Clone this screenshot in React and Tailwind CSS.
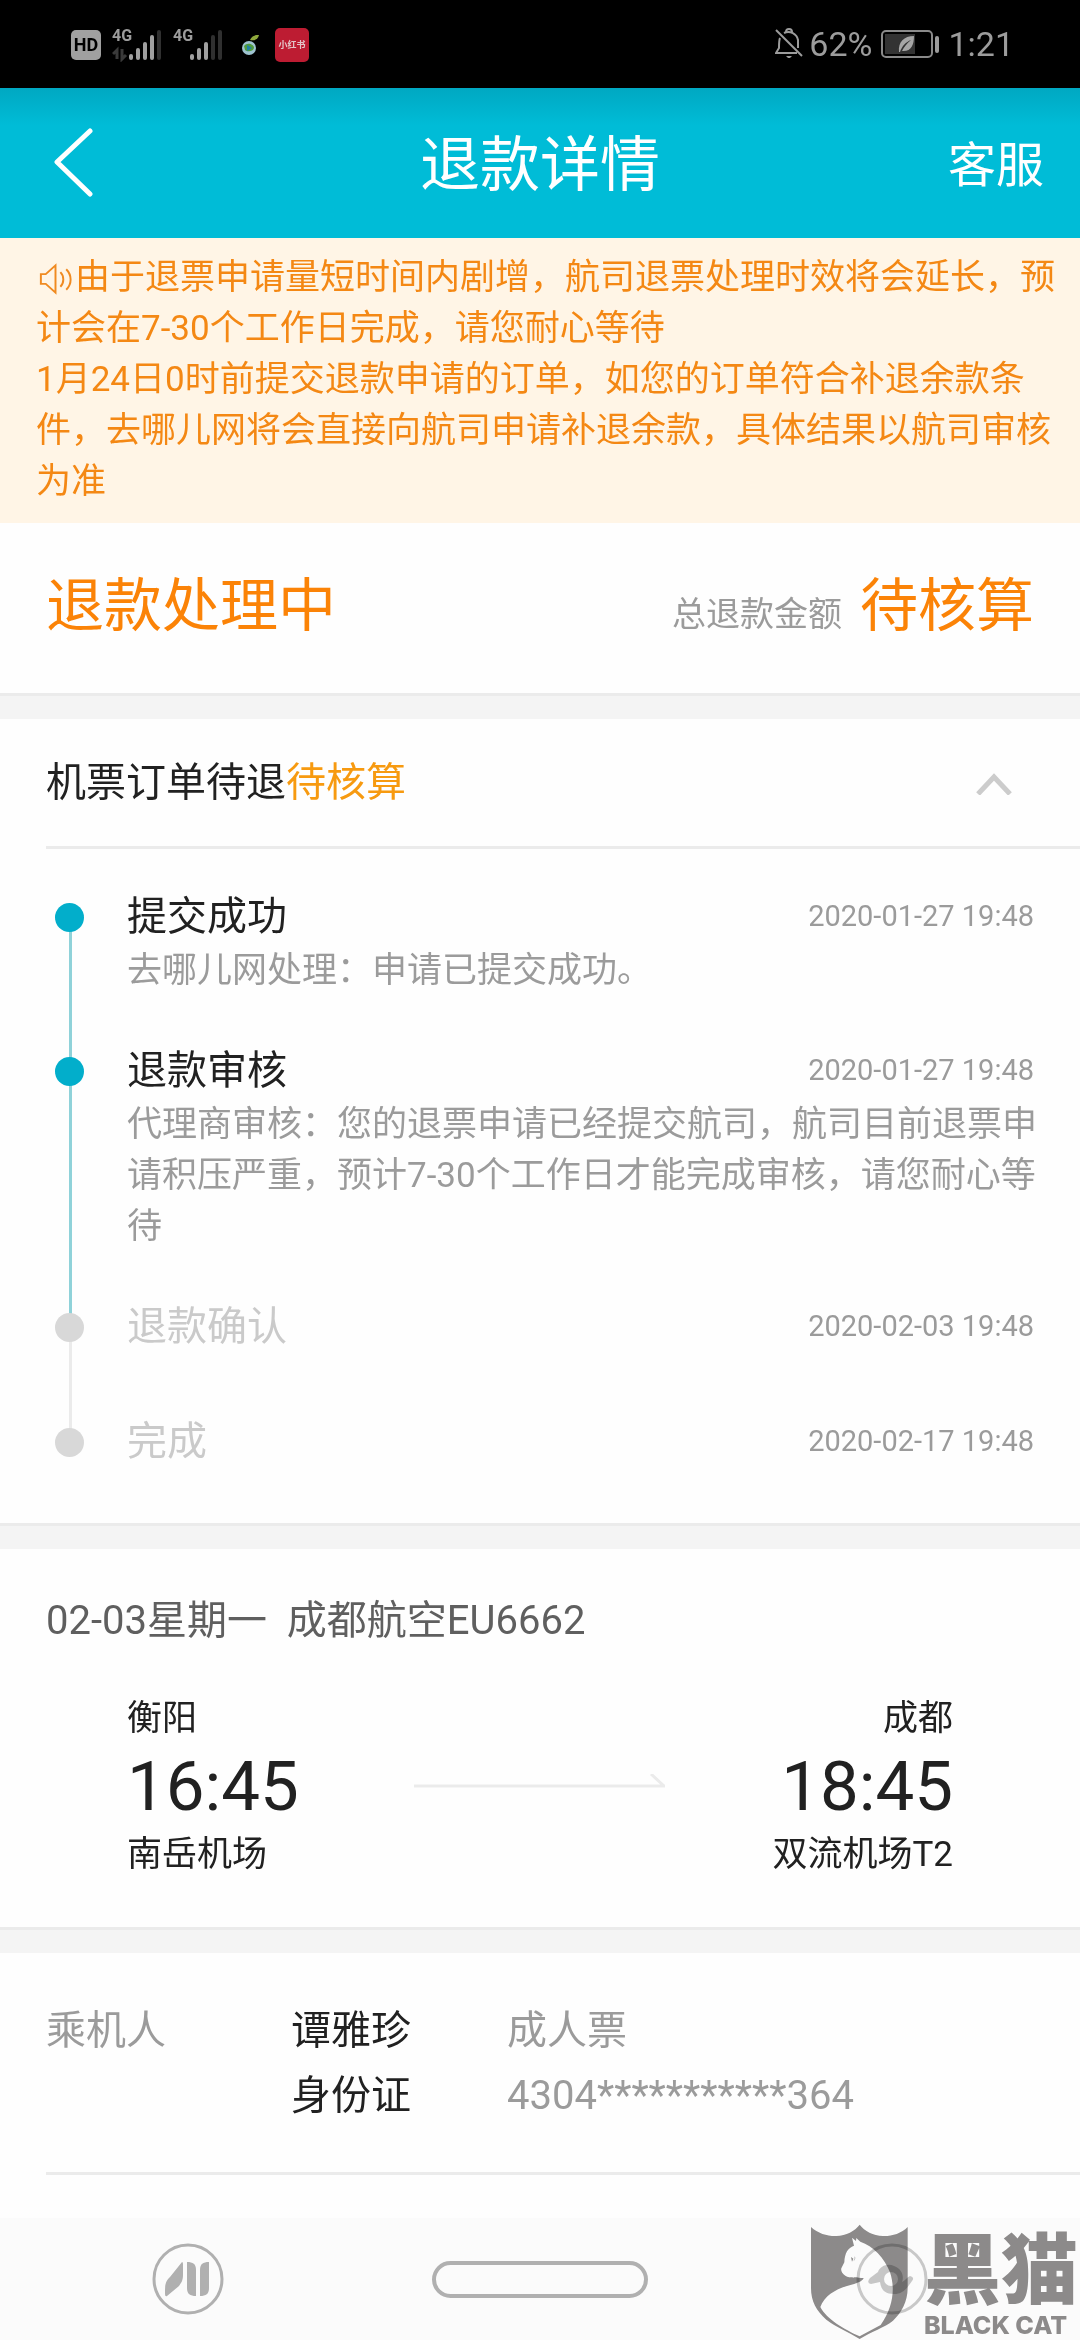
import { useState } from 'react'
import clsx from 'clsx'

const steps = [
  { title: '提交成功', time: '2020-01-27 19:48', detail: '去哪儿网处理：申请已提交成功。', done: true },
  {
    title: '退款审核',
    time: '2020-01-27 19:48',
    detail: '代理商审核：您的退票申请已经提交航司，航司目前退票申请积压严重，预计7-30个工作日才能完成审核，请您耐心等待',
    done: true,
  },
  { title: '退款确认', time: '2020-02-03 19:48', done: false },
  { title: '完成', time: '2020-02-17 19:48', done: false },
]

function Signal({ level, data }) {
  return (
    <span className="relative h-[34px] w-[50px]">
      <span className="absolute left-0 top-0 text-[16px] leading-[16px] font-bold">4G</span>
      <svg viewBox="0 0 50 34" className="h-full w-full">
        {data && <path d="M1 26 L5 22 V31 M10 21 V31 L14 27" fill="none" stroke="#3a3a3a" strokeWidth="3" />}
        {[6, 12, 18, 25, 30].map((h, i) => (
          <rect key={h} x={17 + i * 7} y={32 - h} width="4" height={h} rx="2" fill={i < level ? '#a0a0a0' : '#303030'} />
        ))}
      </svg>
    </span>
  )
}

function StatusBar() {
  return (
    <div className="flex h-[88px] items-center justify-between bg-black pl-[71px] pr-[66px] text-[#9c9c9c]">
      <div className="flex items-center pt-[2px]">
        <span className="flex h-[30px] w-[30px] items-center justify-center rounded-[5px] bg-[#a0a0a0] text-[18px] leading-[30px] font-bold text-black">
          HD
        </span>
        <span className="ml-[11px] flex gap-[11px]">
          <Signal level={4} data />
          <Signal level={3} />
        </span>
        <svg viewBox="0 0 20 22" className="ml-[18px] h-[22px] w-[20px]">
          <circle cx="8" cy="14" r="7" fill="#9fc3d0" />
          <path d="M3 12 C6 8 13 10 13 14 C12 18 6 18 4 16 Z" fill="#4f9a3d" />
          <path d="M6 11 L11 14 L6 17 Z" fill="#1f7fa6" />
          <path d="M9 6 C11 1 15 1 18 1 C17 5 14 7 9 6 Z" fill="#8fa83c" />
        </svg>
        <span className="ml-[14px] flex h-[34px] w-[34px] items-center justify-center rounded-[5px] bg-[#bd1c32] text-[9px] leading-[34px] font-bold whitespace-nowrap text-[#e3c3c7]">
          小红书
        </span>
      </div>
      <div className="flex items-center text-[34px] leading-[40px]">
        <svg viewBox="0 0 28 32" className="mr-[6px] h-[32px] w-[28px]" fill="none" stroke="#9c9c9c" strokeWidth="2">
          <path d="M5 10 C4 12 4 14 4 20 L1 25 H22 M9 5 C15 2 22 6 23 12 V20" />
          <path d="M11 4 C11 0 17 0 17 4" />
          <path d="M1 2 L27 28" />
          <path d="M11 28 H17 L15 30 H13 Z" fill="#9c9c9c" stroke="none" />
        </svg>
        62%
        <svg viewBox="0 0 58 28" className="mx-[9px] h-[28px] w-[58px]">
          <rect x="1" y="1" width="50" height="26" rx="4" fill="none" stroke="#8a8a8a" strokeWidth="2" />
          <rect x="4" y="4" width="30" height="20" fill="#333" />
          <path d="M18 22 C17 12 23 6 33 6 C33 15 30 22 21 21 C23 17 26 13 30 10 C25 12 21 16 19 22 Z" fill="#a6a6a6" />
          <rect x="54" y="6" width="4" height="17" rx="2" fill="#9c9c9c" />
        </svg>
        1:21
      </div>
    </div>
  )
}

function Header() {
  return (
    <header className="grid h-[150px] grid-cols-3 items-center bg-linear-to-b from-[#00a8c2] to-[#00bcd7] to-25% px-[36px] text-white">
      <button type="button" aria-label="返回" className="pl-[16px]">
        <svg viewBox="0 0 42 70" className="h-[70px] w-[42px]" fill="none" stroke="#fff" strokeWidth="5" strokeLinecap="round" strokeLinejoin="round">
          <path d="M38 3 L5 34 L38 66" />
        </svg>
      </button>
      <h1 className="pt-[6px] text-center text-[60px] leading-[80px]">退款详情</h1>
      <button type="button" className="justify-self-end pt-[6px] text-[48px] leading-[80px]">客服</button>
    </header>
  )
}

function Notice() {
  return (
    <div className="bg-[#fff5e6] pl-[36px] pr-[24px] pt-[14px] pb-[16px] text-[35px] leading-[51px] text-[#f48814]">
      <p>
        <svg viewBox="0 0 40 32" className="inline-block h-[32px] w-[39px] align-[-6px]" fill="none" stroke="#f08a20" strokeWidth="2">
          <path d="M5 11 H10 L20 2 V30 L10 21 H5 Z" />
          <path d="M25 9 C29 13 29 20 25 24 M31 6 C37 12 37 21 31 27" />
        </svg>
        由于退票申请量短时间内剧增，航司退票处理时效将会延长，预计会在7-30个工作日完成，请您耐心等待
      </p>
      <p>1月24日0时前提交退款申请的订单，如您的订单符合补退余款条件，去哪儿网将会直接向航司申请补退余款，具体结果以航司审核为准</p>
    </div>
  )
}

function Summary() {
  return (
    <div className="flex h-[170px] items-baseline justify-between px-[46px] pt-[43px] leading-[80px]">
      <h2 className="text-[58px] text-[#fb8307]">退款处理中</h2>
      <p className="flex items-baseline gap-[18px] text-[34px] text-[#9b9b9b]">
        总退款金额 <strong className="text-[58px] font-normal text-[#fb8307]">待核算</strong>
      </p>
    </div>
  )
}

function Gap() {
  return <div className="h-[26px] border-t-[3px] border-[#ebebeb] bg-[#f4f4f4]" />
}

function Step({ step, next }) {
  return (
    <li className={clsx('flex', next && 'pb-[46px]')}>
      <div className="relative w-[72px] shrink-0">
        {next && (
          <span className={clsx('absolute left-[14px] top-[30px] -bottom-[76px] w-[3px]', step.done ? 'bg-[#8fd2d9]' : 'bg-[#ebebeb]')} />
        )}
        <span className={clsx('relative mt-[15px] block h-[29px] w-[29px] rounded-full', step.done ? 'bg-[#02aecb]' : 'bg-[#d8d8d8]')} />
      </div>
      <div className="min-h-[69px] flex-1">
        <div className="flex h-[57px] items-center justify-between pr-[6px]">
          <h3 className={clsx('text-[40px] leading-[57px]', step.done ? 'text-[#212121]' : 'text-[#cacaca]')}>{step.title}</h3>
          <time className="text-[29px] leading-[57px] text-[#9b9b9b]">{step.time}</time>
        </div>
        {step.detail && <p className="text-[35px] leading-[51px] text-[#9b9b9b]">{step.detail}</p>}
      </div>
    </li>
  )
}

function Progress() {
  const [open, setOpen] = useState(true)
  return (
    <section>
      <div className="ml-[46px] flex h-[130px] items-center justify-between border-b-[3px] border-[#ebebeb] pr-[66px]">
        <h2 className="text-[40px] leading-[57px] text-[#212121]">
          机票订单待退<span className="text-[#f79a10]">待核算</span>
        </h2>
        <button type="button" aria-label="展开或收起" onClick={() => setOpen(!open)}>
          <svg viewBox="0 0 40 24" className={clsx('h-[24px] w-[40px]', !open && 'rotate-180')} fill="none" stroke="#ccc" strokeWidth="5">
            <path d="M4 23 L20 6 L36 23" />
          </svg>
        </button>
      </div>
      {open && (
        <ol className="pl-[55px] pr-[40px] pt-[39px] pb-[41px]">
          {steps.map((step, i) => (
            <Step key={step.title} step={step} next={i < steps.length - 1} />
          ))}
        </ol>
      )}
    </section>
  )
}

function Stop({ city, time, airport, right }) {
  return (
    <div className={clsx('text-[35px] leading-[50px] text-[#212121]', right && 'text-right')}>
      <p>{city}</p>
      <p className="py-[3px] text-[69px] leading-[80px]">{time}</p>
      <p>{airport}</p>
    </div>
  )
}

function Flight() {
  return (
    <section className="pt-[43px] pb-[47px]">
      <h2 className="px-[46px] text-[40px] leading-[57px] whitespace-pre text-[#5f5f5f]">02-03星期一{'  '}成都航空EU6662</h2>
      <div className="grid grid-cols-3 items-center px-[127px] pt-[45px]">
        <Stop city="衡阳" time="16:45" airport="南岳机场" />
        <svg viewBox="0 0 252 26" className="h-[26px] w-[252px] justify-self-center" fill="none" stroke="#ebebeb" strokeWidth="3">
          <path d="M0 12 H251 M237 0 L250 12" />
        </svg>
        <Stop city="成都" time="18:45" airport="双流机场T2" right />
      </div>
    </section>
  )
}

function Passenger() {
  return (
    <section className="ml-[46px] border-b-[3px] border-[#ebebeb] pt-[45px] pb-[44px]">
      <dl className="grid grid-cols-[245px_216px_1fr] text-[40px] leading-[65px] text-[#9b9b9b]">
        <dt className="row-span-2">乘机人</dt>
        <dd className="text-[#212121]">谭雅珍</dd>
        <dd>成人票</dd>
        <dd className="text-[#212121]">身份证</dd>
        <dd>4304***********364</dd>
      </dl>
    </section>
  )
}

function NavBar() {
  return (
    <nav className="grid h-[122px] grid-cols-3 place-items-center bg-[#fbfbfb] px-[12px]">
      <button type="button" aria-label="助手">
        <svg viewBox="0 0 72 72" className="h-[72px] w-[72px]" fill="#b0b0b0">
          <circle cx="36" cy="36" r="34" fill="none" stroke="#b0b0b0" strokeWidth="3" />
          <path d="M30 19 Q31 19 31 21 V32 C31 38 29 40 27 43 L15 53 Q13 54 13 51 C13 42 13 39 18 34 Z" />
          <path d="M35 19 C41 19 44 21 44 27 V53 C38 53 35 51 35 45 Z" />
          <path d="M57 19 C51 19 48 21 48 27 V53 C54 53 57 51 57 45 Z" />
        </svg>
      </button>
      <button type="button" aria-label="主页" className="h-[37px] w-[216px] rounded-full border-[4px] border-[#b0b0b0]" />
      <button type="button" aria-label="悬浮">
        <svg viewBox="0 0 72 72" className="h-[72px] w-[72px]">
          <circle cx="36" cy="36" r="34" fill="none" stroke="#c8c8c8" strokeWidth="3" />
          <path d="M22 29 C24 23 32 20 38 23 C47 26 48 35 46 39 C49 38 51 34 54 33 Q59 34 56 38 C50 47 46 51 38 51 C28 51 25 46 24 39 L15 41 Q10 40 14 35 Z" fill="#c6c6c6" />
          <circle cx="35" cy="36" r="7" fill="#fbfbfb" />
        </svg>
      </button>
    </nav>
  )
}

// stamped over the lower right corner of the page
function Watermark() {
  return (
    <div className="pointer-events-none absolute right-0 bottom-0 flex items-end text-[#8e8c8c] mix-blend-multiply">
      <svg viewBox="19 14 291 346" className="h-[116px] w-[97px]">
        <path
          d="M19 22 C40 42 70 50 95 49 C125 47 150 35 165 15 C180 35 205 47 235 49 C260 50 290 42 309 22 V205 C309 245 290 280 265 303 C240 323 200 336 165 358 C130 336 95 323 65 300 C35 273 19 245 19 205 Z"
          fill="#8e8c8c"
        />
        <path
          d="M142 54 L154 64 L155 55 L167 66 C205 78 240 115 256 158 C272 205 266 262 228 316 L165 350 C120 330 65 298 47 262 C60 225 100 205 140 195 C165 189 175 182 177 175 C160 173 135 177 122 168 C112 162 108 152 110 146 L119 128 C120 100 130 84 148 78 Z"
          fill="#fff"
        />
        <path d="M139 112 L146 117 L142 126 Z M150 110 Q155 118 146 125 Q152 118 150 110 Z" fill="#8e8c8c" />
      </svg>
      <div className="ml-[16px] flex w-[156px] flex-col">
        <span className="text-[77px] leading-[76px] font-black">黑猫</span>
        <span className="font-[Inter] text-[25px] leading-[30px] font-extrabold whitespace-nowrap">BLACK CAT</span>
      </div>
    </div>
  )
}

export default function App() {
  return (
    <div className="relative flex min-h-screen flex-col overflow-hidden bg-[#fefefe] font-[Roboto,'Noto_Sans_CJK_SC',sans-serif]">
      <StatusBar />
      <Header />
      <Notice />
      <Summary />
      <Gap />
      <Progress />
      <Gap />
      <Flight />
      <Gap />
      <Passenger />
      <div className="mt-auto">
        <NavBar />
      </div>
      <Watermark />
    </div>
  )
}
